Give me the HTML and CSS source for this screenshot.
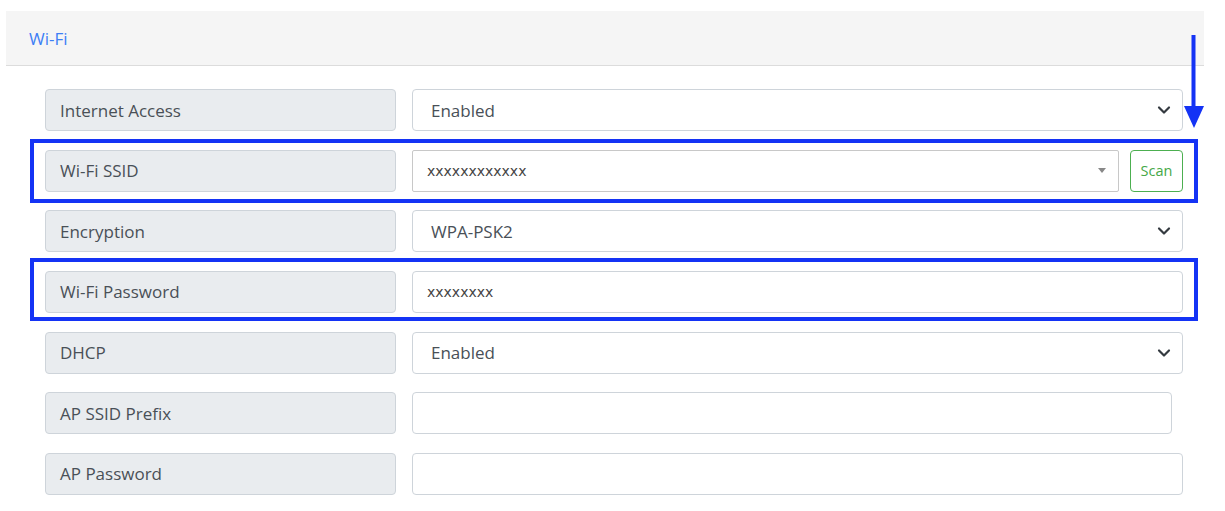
FILE: index.html
```html
<!DOCTYPE html>
<html>
<head>
<meta charset="utf-8">
<link rel="stylesheet" href="styles.css">
</head>
<body>
<div class="card">
  <div class="card-header">Wi-Fi</div>
  <div class="card-body">
    <div class="row">
      <div class="label">Internet Access</div>
      <div class="control select"><span>Enabled</span><svg class="chev" width="14" height="10" viewBox="0 0 14 10"><path d="M2 2.5 L7 7.5 L12 2.5" fill="none" stroke="#343a40" stroke-width="2.2" stroke-linecap="round" stroke-linejoin="round"/></svg></div>
    </div>
    <div class="row mark mark-a">
      <div class="label">Wi-Fi SSID</div>
      <div class="control combo"><span class="mono">xxxxxxxxxxxx</span><span class="tri"></span></div>
      <button class="scan">Scan</button>
    </div>
    <div class="row">
      <div class="label">Encryption</div>
      <div class="control select"><span>WPA-PSK2</span><svg class="chev" width="14" height="10" viewBox="0 0 14 10"><path d="M2 2.5 L7 7.5 L12 2.5" fill="none" stroke="#343a40" stroke-width="2.2" stroke-linecap="round" stroke-linejoin="round"/></svg></div>
    </div>
    <div class="row mark mark-b">
      <div class="label">Wi-Fi Password</div>
      <div class="control input"><span class="mono">xxxxxxxx</span></div>
    </div>
    <div class="row">
      <div class="label">DHCP</div>
      <div class="control select"><span>Enabled</span><svg class="chev" width="14" height="10" viewBox="0 0 14 10"><path d="M2 2.5 L7 7.5 L12 2.5" fill="none" stroke="#343a40" stroke-width="2.2" stroke-linecap="round" stroke-linejoin="round"/></svg></div>
    </div>
    <div class="row">
      <div class="label">AP SSID Prefix</div>
      <div class="control input short"></div>
    </div>
    <div class="row">
      <div class="label">AP Password</div>
      <div class="control input"></div>
    </div>
  </div>
</div>
<svg class="arrow" width="20" height="94" viewBox="0 0 20 94"><rect x="7.5" y="0" width="4" height="76" fill="#1433f5"/><path d="M0 71 L20 71 L10 93 Z" fill="#1433f5"/></svg>
</body>
</html>
```
FILE: styles.css
```css
html, body {
  margin: 0;
  padding: 0;
  background: #fff;
}
body {
  font-family: "Open Sans", "Noto Sans", sans-serif;
  color: #495057;
  padding: 11px 21px 0 6px;
  position: relative;
}
.card {
  background: #fff;
}
.card-header {
  background: #f5f5f5;
  border-bottom: 1px solid #dcdcdc;
  height: 55px;
  box-sizing: border-box;
  padding: 0 23px;
  display: flex;
  align-items: center;
  color: #3d7ef5;
  font-size: 17px;
}
.card-body {
  padding: 23px 21px 16px 39px;
  display: flex;
  flex-direction: column;
  gap: 18.67px;
}
.row {
  display: flex;
  height: 42px;
  gap: 16px;
  position: relative;
}
.mark::after {
  content: "";
  position: absolute;
  border: 4px solid #1433f5;
  pointer-events: none;
}
.mark-a::after { top: -11px; bottom: -11px; left: -15px; right: -15px; }
.mark-b::after { top: -13px; bottom: -8px; left: -15px; right: -15px; }
.label {
  width: 351px;
  flex: none;
  box-sizing: border-box;
  background: #e9ecef;
  border: 1px solid #ced4da;
  border-radius: 4px;
  padding: 0 14px;
  display: flex;
  align-items: center;
  font-size: 17px;
}
.control {
  flex: 1;
  box-sizing: border-box;
  border: 1px solid #ced4da;
  border-radius: 4px;
  display: flex;
  align-items: center;
  font-size: 17px;
  color: #495057;
  background: #fff;
}
.select {
  padding: 0 11px 0 18px;
  justify-content: space-between;
}
.input {
  padding: 0 14px;
}
.short {
  margin-right: 11px;
}
.mono {
  font-family: "DejaVu Sans", sans-serif;
  font-size: 14px;
  color: #444;
}
.combo {
  border-color: #c8c8c8;
  border-radius: 2px;
  padding: 0 12px 0 14px;
  justify-content: space-between;
}
.tri {
  width: 0;
  height: 0;
  border-left: 4.5px solid transparent;
  border-right: 4.5px solid transparent;
  border-top: 5px solid #888;
}
.scan {
  flex: none;
  width: 53px;
  height: 42px;
  margin-left: -5px;
  box-sizing: border-box;
  background: #fff;
  border: 1px solid #4caf50;
  border-radius: 4px;
  color: #45a847;
  font-family: "Open Sans", "Noto Sans", sans-serif;
  font-size: 14.5px;
  padding: 0;
}
.arrow {
  position: absolute;
  left: 1184px;
  top: 35px;
}
```
